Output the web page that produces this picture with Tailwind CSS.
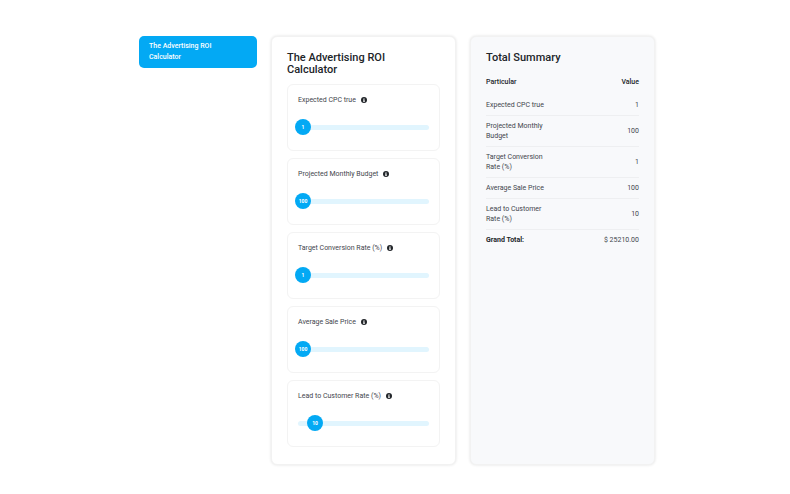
<!DOCTYPE html>
<html lang="en">
<head>
<meta charset="utf-8">
<meta name="viewport" content="width=device-width, initial-scale=1">
<title>The Advertising ROI Calculator</title>
<script src="https://cdn.jsdelivr.net/npm/@tailwindcss/browser@4"></script>
</head>
<body class="bg-white font-[Roboto,sans-serif] text-[7px] leading-[10px] text-[#3f464d]">
<svg class="hidden" aria-hidden="true"><symbol id="info" viewBox="0 0 512 512"><circle cx="256" cy="256" r="256" fill="currentColor"/><path fill="#fff" d="M256 96a50 50 0 1 1 0 100 50 50 0 0 1 0-100zM180 216h126v130h30v60H176v-60h32v-70h-28z"/></symbol></svg>
<div class="mx-auto grid max-w-[520px] grid-cols-[118fr_185fr_185fr] gap-[14px] pt-9 pb-7 pl-1">
  <nav>
    <a href="#calculator" class="block rounded-[5px] bg-[#03a9f4] py-[5px] pr-7 pl-[10px] font-medium leading-[11px] text-white">The Advertising ROI Calculator</a>
  </nav>
  <main id="calculator" class="rounded-[6px] border border-[#f2f2f2] bg-white px-[15px] pt-[15px] pb-[17px] shadow-[0_0_3px_rgba(0,0,0,0.12)]">
    <h1 class="pr-8 text-[11px] font-medium leading-[12px] text-[#212529]">The Advertising ROI Calculator</h1>
    <form class="mt-2 flex flex-col gap-[7px]">
      <div class="rounded-[6px] border border-[#f3f3f3] px-[10px] pt-[9px] pb-[15px]">
        <div class="flex items-center gap-[5px] leading-[12px]"><label for="cpc">Expected CPC true</label><svg class="size-[6px] text-[#212529]"><use href="#info"/></svg></div>
        <div class="relative -mx-[3px] mt-[13px] flex h-4 items-center">
          <div class="mx-[3px] h-[5px] flex-1 rounded-full bg-[#e1f5fe]"></div>
          <input id="cpc" type="range" min="1" max="100" value="1" class="absolute inset-0 w-full cursor-pointer appearance-none bg-transparent [&::-webkit-slider-thumb]:size-4 [&::-webkit-slider-thumb]:appearance-none [&::-webkit-slider-thumb]:rounded-full [&::-webkit-slider-thumb]:bg-[#03a9f4]">
          <output for="cpc" class="pointer-events-none absolute w-4 text-center text-[5px] font-bold text-white" style="left:0">1</output>
        </div>
      </div>
      <div class="rounded-[6px] border border-[#f3f3f3] px-[10px] pt-[9px] pb-[15px]">
        <div class="flex items-center gap-[5px] leading-[12px]"><label for="budget">Projected Monthly Budget</label><svg class="size-[6px] text-[#212529]"><use href="#info"/></svg></div>
        <div class="relative -mx-[3px] mt-[13px] flex h-4 items-center">
          <div class="mx-[3px] h-[5px] flex-1 rounded-full bg-[#e1f5fe]"></div>
          <input id="budget" type="range" min="100" max="10000" value="100" class="absolute inset-0 w-full cursor-pointer appearance-none bg-transparent [&::-webkit-slider-thumb]:size-4 [&::-webkit-slider-thumb]:appearance-none [&::-webkit-slider-thumb]:rounded-full [&::-webkit-slider-thumb]:bg-[#03a9f4]">
          <output for="budget" class="pointer-events-none absolute w-4 text-center text-[5px] font-bold text-white" style="left:0">100</output>
        </div>
      </div>
      <div class="rounded-[6px] border border-[#f3f3f3] px-[10px] pt-[9px] pb-[15px]">
        <div class="flex items-center gap-[5px] leading-[12px]"><label for="conversion">Target Conversion Rate (%)</label><svg class="size-[6px] text-[#212529]"><use href="#info"/></svg></div>
        <div class="relative -mx-[3px] mt-[13px] flex h-4 items-center">
          <div class="mx-[3px] h-[5px] flex-1 rounded-full bg-[#e1f5fe]"></div>
          <input id="conversion" type="range" min="1" max="100" value="1" class="absolute inset-0 w-full cursor-pointer appearance-none bg-transparent [&::-webkit-slider-thumb]:size-4 [&::-webkit-slider-thumb]:appearance-none [&::-webkit-slider-thumb]:rounded-full [&::-webkit-slider-thumb]:bg-[#03a9f4]">
          <output for="conversion" class="pointer-events-none absolute w-4 text-center text-[5px] font-bold text-white" style="left:0">1</output>
        </div>
      </div>
      <div class="rounded-[6px] border border-[#f3f3f3] px-[10px] pt-[9px] pb-[15px]">
        <div class="flex items-center gap-[5px] leading-[12px]"><label for="price">Average Sale Price</label><svg class="size-[6px] text-[#212529]"><use href="#info"/></svg></div>
        <div class="relative -mx-[3px] mt-[13px] flex h-4 items-center">
          <div class="mx-[3px] h-[5px] flex-1 rounded-full bg-[#e1f5fe]"></div>
          <input id="price" type="range" min="100" max="10000" value="100" class="absolute inset-0 w-full cursor-pointer appearance-none bg-transparent [&::-webkit-slider-thumb]:size-4 [&::-webkit-slider-thumb]:appearance-none [&::-webkit-slider-thumb]:rounded-full [&::-webkit-slider-thumb]:bg-[#03a9f4]">
          <output for="price" class="pointer-events-none absolute w-4 text-center text-[5px] font-bold text-white" style="left:0">100</output>
        </div>
      </div>
      <div class="rounded-[6px] border border-[#f3f3f3] px-[10px] pt-[9px] pb-[15px]">
        <div class="flex items-center gap-[5px] leading-[12px]"><label for="lead">Lead to Customer Rate (%)</label><svg class="size-[6px] text-[#212529]"><use href="#info"/></svg></div>
        <div class="relative -mx-[3px] mt-[13px] flex h-4 items-center">
          <div class="mx-[3px] h-[5px] flex-1 rounded-full bg-[#e1f5fe]"></div>
          <input id="lead" type="range" min="0" max="100" value="10" class="absolute inset-0 w-full cursor-pointer appearance-none bg-transparent [&::-webkit-slider-thumb]:size-4 [&::-webkit-slider-thumb]:appearance-none [&::-webkit-slider-thumb]:rounded-full [&::-webkit-slider-thumb]:bg-[#03a9f4]">
          <output for="lead" class="pointer-events-none absolute w-4 text-center text-[5px] font-bold text-white" style="left:calc((100% - 16px) * 0.1)">10</output>
        </div>
      </div>
    </form>
  </main>
  <section class="rounded-[6px] border border-[#f2f2f2] bg-[#f8f9fb] px-[15px] pt-[15px] pb-[17px] shadow-[0_0_3px_rgba(0,0,0,0.12)]">
    <h2 class="text-[11px] font-medium leading-[12px] text-[#212529]">Total Summary</h2>
    <table class="mt-2 w-full table-fixed border-collapse [&_td]:py-[5px] [&_td:last-child]:text-right">
      <colgroup><col class="w-[43%]"><col></colgroup>
      <thead class="text-[#212529]"><tr><th class="pt-[5px] pb-2 text-left font-medium">Particular</th><th class="pt-[5px] pb-2 text-right font-medium">Value</th></tr></thead>
      <tbody class="[&_tr]:border-b [&_tr]:border-[#eeeff1]">
        <tr><td>Expected CPC true</td><td>1</td></tr>
        <tr><td>Projected Monthly Budget</td><td>100</td></tr>
        <tr><td>Target Conversion Rate (%)</td><td>1</td></tr>
        <tr><td>Average Sale Price</td><td>100</td></tr>
        <tr><td>Lead to Customer Rate (%)</td><td>10</td></tr>
      </tbody>
      <tfoot><tr><td class="font-bold text-[#212529]">Grand Total:</td><td>$ 25210.00</td></tr></tfoot>
    </table>
  </section>
</div>
</body>
</html>
